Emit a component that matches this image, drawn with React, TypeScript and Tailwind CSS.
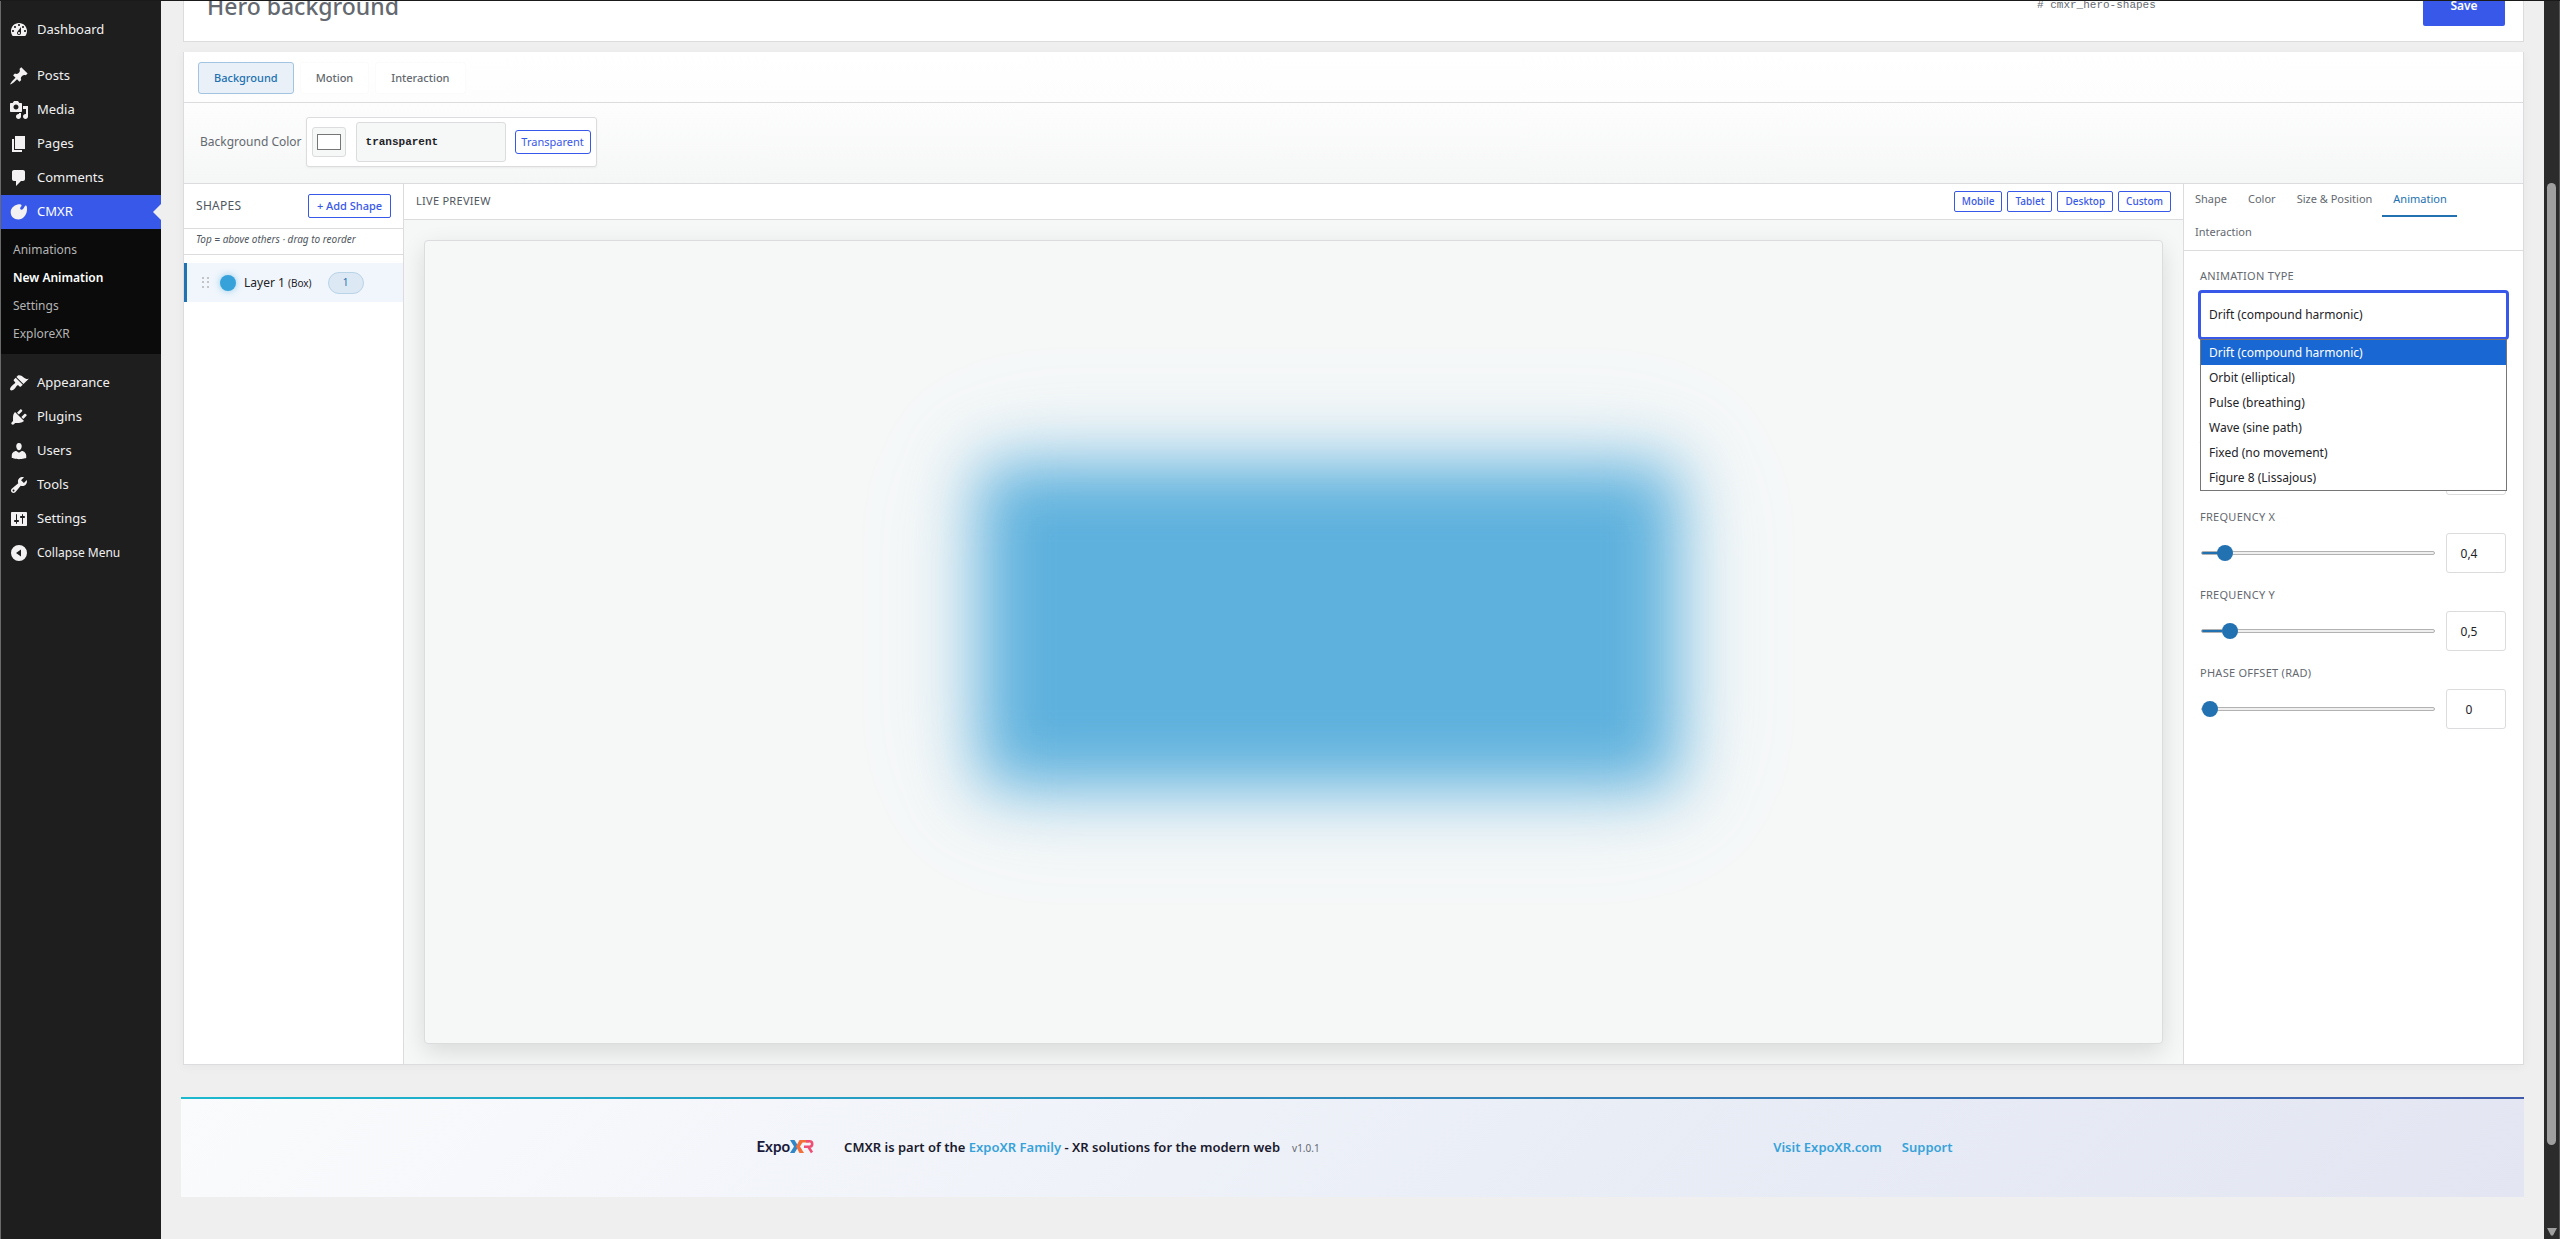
import React, { useState } from 'react';

const ICONS = {
  dashboard:
    'M3.76 16h12.48c1.1-1.37 1.76-3.11 1.76-5 0-4.42-3.58-8-8-8s-8 3.58-8 8c0 1.89.66 3.63 1.76 5zM10 4c.55 0 1 .45 1 1s-.45 1-1 1-1-.45-1-1 .45-1 1-1zM6 6c.55 0 1 .45 1 1s-.45 1-1 1-1-.45-1-1 .45-1 1-1zm8 0c.55 0 1 .45 1 1s-.45 1-1 1-1-.45-1-1 .45-1 1-1zm-5.37 5.55L12 7v6c0 1.1-.9 2-2 2s-2-.9-2-2c0-.57.24-1.08.63-1.45zM4 10c.55 0 1 .45 1 1s-.45 1-1 1-1-.45-1-1 .45-1 1-1zm12 0c.55 0 1 .45 1 1s-.45 1-1 1-1-.45-1-1 .45-1 1-1zm-5 3c0-.55-.45-1-1-1s-1 .45-1 1 .45 1 1 1 1-.45 1-1z',
  post: 'M10.44 3.02l1.82-1.82 6.36 6.35-1.83 1.82c-1.05-.68-2.48-.57-3.41.36l-.75.75c-.92.93-1.04 2.35-.35 3.41l-1.83 1.82-2.41-2.41-2.8 2.79c-.42.42-3.38 2.71-3.8 2.29s1.86-3.39 2.28-3.81l2.79-2.79L4.1 9.36l1.83-1.82c1.05.69 2.48.57 3.4-.36l.75-.75c.93-.92 1.05-2.35.36-3.41z',
  media:
    'M13 11V4c0-.55-.45-1-1-1h-1.67L9 1H5L3.67 3H2c-.55 0-1 .45-1 1v7c0 .55.45 1 1 1h10c.55 0 1-.45 1-1zM7 4.5c1.38 0 2.5 1.12 2.5 2.5S8.38 9.5 7 9.5 4.5 8.38 4.5 7 5.62 4.5 7 4.5zM14 6h5v10.5c0 1.38-1.12 2.5-2.5 2.5S14 17.88 14 16.5s1.12-2.5 2.5-2.5c.17 0 .34.02.5.05V9h-3V6zm-4 8.05V13h2v3.5c0 1.38-1.12 2.5-2.5 2.5S7 17.88 7 16.5 8.12 14 9.5 14c.17 0 .34.02.5.05z',
  page: 'M6 15V2h10v13H6zm-1 1h8v2H3V5h2v11z',
  comments:
    'M5 2h9c1.1 0 2 .9 2 2v7c0 1.1-.9 2-2 2h-2l-5 5v-5H5c-1.1 0-2-.9-2-2V4c0-1.1.9-2 2-2z',
  cmxr: 'M8.6 2.6c1.9-.5 3.6-.2 3.9.6.3.9-.9 1.6-1.3 2.6-.3 1 .3 1.9 1.2 1.9 1.5 0 2.3-1.3 2.9-2.7.5-1.1 1.3-1.8 2-1.3.8.6.9 2.9.6 5-.6 4.6-3.9 8.8-8.5 8.8-4.4 0-7.7-3-7.7-7.2 0-3.7 2.9-6.7 6.9-7.7z',
  appearance:
    'M14.48 11.06L7.41 3.99l1.5-1.5c.5-.56 2.3-.47 3.51.32 1.21.8 1.43 1.28 2.91 2.1 1.18.64 2.45 1.26 4.45.85zm-.71.71L6.7 4.7 4.93 6.47c-.39.39-.39 1.02 0 1.41l1.06 1.06c.39.39.39 1.03 0 1.42-.6.6-1.43 1.11-2.21 1.69-.35.26-.7.53-1.01.84C1.43 14.23.4 16.08 1.4 17.07c.99 1 2.84-.03 4.18-1.36.31-.31.58-.66.85-1.02.57-.78 1.08-1.61 1.69-2.21.39-.39 1.02-.39 1.41 0l1.06 1.06c.39.39 1.02.39 1.41 0z',
  plugins:
    'M13.11 4.36L9.87 7.6 8 5.73l3.24-3.24c.35-.34 1.05-.2 1.56.32.52.51.66 1.21.31 1.55zm-8 1.77l.91-1.12 9.01 9.01-1.19.84c-.71.71-2.63 1.16-3.82 1.16H6.14L4.9 17.26c-.59.59-1.54.59-2.12 0-.59-.58-.59-1.53 0-2.12l1.24-1.24v-3.88c0-1.13.4-3.19 1.09-3.89zm7.26 3.97l3.24-3.24c.34-.35 1.04-.21 1.55.31.52.51.66 1.21.31 1.55l-3.24 3.25z',
  users:
    'M10 9.25c-2.27 0-2.73-3.44-2.73-3.44C7 4.02 7.82 2 9.97 2c2.16 0 2.98 2.02 2.71 3.81 0 0-.41 3.44-2.68 3.44zm0 2.57L12.72 10c2.39 0 4.52 2.33 4.52 4.53v2.49s-3.65 1.13-7.24 1.13c-3.65 0-7.24-1.13-7.24-1.13v-2.49c0-2.25 1.94-4.48 4.47-4.48z',
  tools:
    'M16.68 9.77c-1.34 1.34-3.3 1.67-4.95.99l-5.41 6.52c-.99.99-2.59.99-3.58 0s-.99-2.59 0-3.57l6.52-5.42c-.68-1.65-.35-3.61.99-4.95 1.28-1.28 3.12-1.62 4.72-1.06l-2.89 2.89 2.82 2.82 2.86-2.87c.53 1.58.18 3.39-1.08 4.65zM3.81 16.21c.4.39 1.04.39 1.43 0 .4-.4.4-1.04 0-1.43-.39-.4-1.03-.4-1.43 0-.39.39-.39 1.03 0 1.43z',
  settings:
    'M18 16V4c0-.55-.45-1-1-1H3c-.55 0-1 .45-1 1v12c0 .55.45 1 1 1h14c.55 0 1-.45 1-1zM8 11h1c.55 0 1 .45 1 1s-.45 1-1 1H8v1.5c0 .28-.22.5-.5.5s-.5-.22-.5-.5V13H6c-.55 0-1-.45-1-1s.45-1 1-1h1V5.5c0-.28.22-.5.5-.5s.5.22.5.5V11zm5-2h-1c-.55 0-1-.45-1-1s.45-1 1-1h1V5.5c0-.28.22-.5.5-.5s.5.22.5.5V7h1c.55 0 1 .45 1 1s-.45 1-1 1h-1v5.5c0 .28-.22.5-.5.5s-.5-.22-.5-.5V9z',
  collapse: 'M10 2a8 8 0 1 0 0 16 8 8 0 0 0 0-16zm2 11.5l-5-3.5 5-3.5z',
};

type IconName = keyof typeof ICONS;

function Icon({ name }: { name: IconName }) {
  return (
    <svg viewBox="0 0 20 20" className="h-5 w-5 shrink-0" fill="#f3f1f1" fillRule="evenodd" aria-hidden="true">
      <path d={ICONS[name]} />
    </svg>
  );
}

function MenuItem({ icon, label }: { icon: IconName; label: string }) {
  return (
    <a href="#" className="flex h-[34px] items-center gap-2 pl-2 text-[13px] text-[#f0f0f1]">
      <Icon name={icon} />
      {label}
    </a>
  );
}

const SUBMENU = ['Animations', 'New Animation', 'Settings', 'ExploreXR'];

function Sidebar() {
  return (
    <nav aria-label="Main menu" className="w-[161px] shrink-0 border-l border-[#6a6a6a] bg-[#1e1e1e] pt-3">
      <MenuItem icon="dashboard" label="Dashboard" />
      <div className="mt-3">
        <MenuItem icon="post" label="Posts" />
        <MenuItem icon="media" label="Media" />
        <MenuItem icon="page" label="Pages" />
        <MenuItem icon="comments" label="Comments" />
      </div>
      <a href="#" className="flex h-[34px] items-center gap-2 bg-[#3858e9] pl-2 text-[13px] text-white">
        <Icon name="cmxr" />
        CMXR
        <svg viewBox="0 0 8 16" className="ml-auto h-4 w-2" fill="#efefef" aria-hidden="true">
          <path d="M8 0v16L0 8z" />
        </svg>
      </a>
      <div className="bg-[#0b0b0b] pt-[7px] pb-1.5">
        {SUBMENU.map((item) => (
          <a
            key={item}
            href="#"
            className={
              item === 'New Animation'
                ? 'flex h-7 items-center pl-3 text-xs font-semibold text-white'
                : 'flex h-7 items-center pl-3 text-xs text-[#b4b4b4]'
            }
          >
            {item}
          </a>
        ))}
      </div>
      <div className="mt-3">
        <MenuItem icon="appearance" label="Appearance" />
        <MenuItem icon="plugins" label="Plugins" />
        <MenuItem icon="users" label="Users" />
        <MenuItem icon="tools" label="Tools" />
        <MenuItem icon="settings" label="Settings" />
        <button type="button" className="flex h-[34px] w-full items-center gap-2 pl-2 text-xs text-[#f0f0f1]">
          <Icon name="collapse" />
          Collapse Menu
        </button>
      </div>
    </nav>
  );
}

function TitleBar() {
  return (
    <header className="-mt-8 ml-0.5 flex h-[73px] items-center border border-[#dcdcde] bg-white pr-[18px] pl-[23px]">
      <input
        aria-label="Animation title"
        defaultValue="Hero background"
        className="h-10 min-w-0 flex-1 bg-transparent text-[23px] font-medium text-[#646970] outline-none"
      />
      <code className="w-[386px] font-[Liberation_Mono,monospace] text-[11px] text-[#646970]"># cmxr_hero-shapes</code>
      <button type="button" className="h-10 w-[82px] rounded-[2px] bg-[#3858e9] text-xs font-semibold text-white">
        Save
      </button>
    </header>
  );
}

function SettingsTabs() {
  const base = 'h-8 rounded-[3px] border px-[15px] text-[11px] font-medium';
  return (
    <div className="flex h-[51px] items-end gap-1.5 border-b border-[#dcdcde] bg-[linear-gradient(#ffffff,#fdfdfd)] pb-2 pl-[14px]">
      <button type="button" className={`${base} border-[#a3c4e0] bg-[#e9f0f7] text-[#2271b1]`}>
        Background
      </button>
      <button type="button" className={`${base} border-[#fbfbfb] bg-white text-[#646970]`}>
        Motion
      </button>
      <button type="button" className={`${base} border-[#fbfbfb] bg-white text-[#646970]`}>
        Interaction
      </button>
    </div>
  );
}

function BackgroundRow() {
  return (
    <div className="flex h-[81px] items-center gap-1 border-b border-[#dcdcde] bg-[linear-gradient(#fdfdfd,#f5f7f6)] pb-0.5 pl-4">
      <label htmlFor="bg-color" className="text-xs text-[#646970]">
        Background Color
      </label>
      <div className="flex h-[50px] items-center rounded-[3px] border border-[#dcdcde] bg-white px-[5px] shadow-xs">
        <button
          type="button"
          aria-label="Pick a color"
          className="flex h-[30px] w-[34px] items-center justify-center rounded-[3px] border border-[#dcdcde] bg-[#f6f7f7]"
        >
          <span className="block h-4 w-6 border border-[#767676] bg-white" />
        </button>
        <input
          id="bg-color"
          defaultValue="transparent"
          className="ml-2.5 h-10 w-[150px] rounded-[3px] border border-[#dcdcde] bg-[#f6f7f7] px-[9px] font-[Liberation_Mono,monospace] text-[11px] font-bold text-[#1d2327] outline-none"
        />
        <button
          type="button"
          className="ml-[9px] h-6 w-[76px] rounded-[3px] border border-[#3858e9] bg-white text-[11px] text-[#3858e9]"
        >
          Transparent
        </button>
      </div>
    </div>
  );
}

function ShapesPanel() {
  return (
    <section className="w-[220px] shrink-0 border-r border-[#dcdcde] bg-white">
      <div className="flex h-[45px] items-center justify-between border-b border-[#dcdcde] px-3">
        <h2 className="text-xs tracking-wide text-[#50575e]">SHAPES</h2>
        <button
          type="button"
          className="h-6 w-[83px] rounded-[2px] border border-[#3858e9] bg-white text-[11px] font-medium text-[#3858e9]"
        >
          + Add Shape
        </button>
      </div>
      <p className="h-[26px] border-b border-[#dcdcde] pl-3 text-[10px] leading-[21px] text-[#50575e] italic">
        Top = above others · drag to reorder
      </p>
      <div className="mt-2 flex h-[39px] items-center border-l-3 border-[#2271b1] bg-[#f0f6fc] pl-[15px]">
        <svg viewBox="0 0 7 11" className="h-[11px] w-[7px]" fill="#c3c4c7" aria-hidden="true">
          <path d="M0 0h2v2H0zM5 0h2v2H5zM0 4h2v2H0zM5 4h2v2H5zM0 9h2v2H0zM5 9h2v2H5z" />
        </svg>
        <span className="ml-[11px] h-4 w-4 rounded-full bg-[#37a2d9] shadow-[0_0_6px_#37a2d980]" />
        <span className="ml-2 text-xs text-[#1d2327]">
          Layer 1 <span className="text-[10px]">(Box)</span>
        </span>
        <span className="ml-4 flex h-[22px] w-9 items-center justify-center rounded-full border border-[#b9d3e7] bg-[#dce8f3] text-[10px] text-[#2271b1]">
          1
        </span>
      </div>
    </section>
  );
}

function Preview() {
  return (
    <section className="flex min-w-0 flex-1 flex-col bg-[#f6f7f7]">
      <div className="flex h-9 items-center justify-between border-b border-[#dcdcde] bg-white pr-3 pl-3">
        <h2 className="text-[11px] tracking-wide text-[#50575e]">LIVE PREVIEW</h2>
        <div className="flex gap-[5px]">
          {['Mobile', 'Tablet', 'Desktop', 'Custom'].map((device) => (
            <button
              key={device}
              type="button"
              className="h-[21px] rounded-[2px] border border-[#3858e9] bg-white px-[7px] text-[10px] font-medium text-[#3858e9]"
            >
              {device}
            </button>
          ))}
        </div>
      </div>
      <div className="overflow-hidden p-5">
        <div className="relative h-[804px] overflow-hidden rounded-[4px] border border-[#dcdcde] bg-[#f6f8f8] shadow-[0_8px_24px_rgba(0,0,0,0.12)]">
          <div className="absolute top-[28%] left-[32%] h-[40%] w-[40%] bg-[#5eb1dd] shadow-[0_0_80px_rgba(94,177,221,0.3)] blur-[32px]" />
        </div>
      </div>
    </section>
  );
}

const ANIMATION_TYPES = [
  'Drift (compound harmonic)',
  'Orbit (elliptical)',
  'Pulse (breathing)',
  'Wave (sine path)',
  'Fixed (no movement)',
  'Figure 8 (Lissajous)',
];

function RangeField({ label, value, min, max }: { label: string; value: number; min: number; max: number }) {
  const [current, setCurrent] = useState(value);
  const id = label.toLowerCase().replace(/[^a-z]+/g, '-');
  const filled = ((current - min) / (max - min)) * 100;
  return (
    <div className="h-[78px]">
      <label htmlFor={id} className="block h-6 text-[11px] leading-4 tracking-wide text-[#646970]">
        {label}
      </label>
      <div className="flex h-10 items-center justify-between pr-px pl-px">
        <input
          id={id}
          type="range"
          min={min}
          max={max}
          step={0.05}
          value={current}
          onChange={(e) => setCurrent(Number(e.target.value))}
          style={{
            backgroundImage: `linear-gradient(90deg, #2271b1 ${filled}%, transparent ${filled}%)`,
          }}
          className="h-1 w-[234px] appearance-none rounded-full border border-[#b2b2b2] bg-[#efefef] bg-origin-border [&::-webkit-slider-thumb]:h-4 [&::-webkit-slider-thumb]:w-4 [&::-webkit-slider-thumb]:appearance-none [&::-webkit-slider-thumb]:rounded-full [&::-webkit-slider-thumb]:bg-[#2271b1]"
        />
        <input
          aria-label={`${label} value`}
          value={String(current).replace('.', ',')}
          readOnly
          className="h-10 w-[60px] rounded-[3px] border border-[#dcdcde] bg-white pr-[18px] pl-1 text-center text-xs text-[#1d2327] outline-none"
        />
      </div>
    </div>
  );
}

function Inspector() {
  return (
    <section className="w-[339px] shrink-0 bg-white">
      <div className="flex flex-wrap border-b border-[#dcdcde]">
        {['Shape', 'Color', 'Size & Position', 'Animation', 'Interaction'].map((tab) => (
          <button
            key={tab}
            type="button"
            className={
              tab === 'Animation'
                ? 'h-[33px] border-b-2 border-[#2271b1] pr-2.5 pl-[11px] text-[11px] text-[#2271b1]'
                : 'h-[33px] border-b-2 border-transparent pr-2.5 pl-[11px] text-[11px] text-[#646970]'
            }
          >
            {tab}
          </button>
        ))}
      </div>
      <div className="px-4 pt-[17px]">
        <label htmlFor="animation-type" className="block h-[22px] text-[11px] leading-4 tracking-wide text-[#646970]">
          ANIMATION TYPE
        </label>
        <div className="relative -mx-0.5 mb-[13px]">
          <select
            id="animation-type"
            className="block h-[50px] w-full appearance-none rounded-[4px] border-3 border-[#3858e9] bg-white pl-2 text-xs text-[#1d2327] outline-none"
          >
            {ANIMATION_TYPES.map((type) => (
              <option key={type}>{type}</option>
            ))}
          </select>
          <ul
            role="listbox"
            aria-label="Animation type options"
            className="absolute inset-x-0.5 top-[49px] z-10 border border-[#767676] bg-white"
          >
            {ANIMATION_TYPES.map((type, index) => (
              <li
                key={type}
                role="option"
                aria-selected={index === 0}
                className={
                  index === 0
                    ? 'h-[25px] bg-[#1967d2] pl-2 text-xs leading-[25px] text-white'
                    : 'h-[25px] pl-2 text-xs leading-[25px] text-[#1d2327]'
                }
              >
                {type}
              </li>
            ))}
          </ul>
        </div>
        <RangeField label="AMPLITUDE X" value={20} min={0} max={100} />
        <RangeField label="AMPLITUDE Y" value={20} min={0} max={100} />
        <RangeField label="FREQUENCY X" value={0.4} min={0.05} max={5} />
        <RangeField label="FREQUENCY Y" value={0.5} min={0.05} max={5} />
        <RangeField label="PHASE OFFSET (RAD)" value={0} min={0} max={6.25} />
      </div>
    </section>
  );
}

function Logo() {
  return (
    <span className="mr-[30px] flex items-center pb-1 pl-1 font-[Lato,sans-serif] text-[15px] leading-4 font-bold text-[#1a1a3a]">
      Expo
      <svg viewBox="0 0 24 15" className="h-[15px] w-6" fill="none" role="img" aria-label="XR">
        <path d="M0 1h4.500l4 6.500-4 6.500H0l4-6.500z" fill="#2f86c6" />
        <path d="M14 1H9.500L6 7.500 9.500 14H14l-4-6.500z" fill="#f4703b" />
        <path d="M12 1h7v2.600h-8.500z" fill="#f4703b" />
        <path d="M16 2.300h3.500a2.700 2.700 0 0 1 0 5.400H14M18.500 8l3.500 5.500" stroke="#ef4f74" strokeWidth="2.600" />
      </svg>
    </span>
  );
}

function Footer() {
  return (
    <footer className="mt-8">
      <div className="h-0.5 bg-[linear-gradient(90deg,#1bb9ce,#3f5aab)]" />
      <div className="bg-[linear-gradient(135deg,#fafbfc_0%,#f5f7fb_20%,#e9edf6_60%,#e3e6f2_100%)]">
        <div className="mx-auto flex h-[98px] max-w-[1200px] items-center text-[13px] font-semibold">
          <Logo />
          <p className="text-[#1a1a2e]">
            CMXR is part of the{' '}
            <a href="#" className="text-[#37a2d9]">
              ExpoXR Family
            </a>{' '}
            - XR solutions for the modern web
          </p>
          <span className="ml-3 text-[10px] font-normal text-[#646970]">v1.0.1</span>
          <div className="ml-auto flex gap-5 text-[#37a2d9]">
            <a href="#">Visit ExpoXR.com</a>
            <a href="#">Support</a>
          </div>
        </div>
      </div>
    </footer>
  );
}

function ScrollRail() {
  return (
    <div
      className="flex w-4 shrink-0 flex-col items-center justify-between border-r border-[#555555] bg-[#2b2b2b] pt-[182px] pb-[3px]"
      aria-hidden="true"
    >
      <div className="h-[962px] w-[9px] rounded-full bg-[#9f9f9f]" />
      <svg viewBox="0 0 10 8" className="h-2 w-2.5" fill="#9f9f9f">
        <path d="M0 0h10L6 7.5H4z" />
      </svg>
    </div>
  );
}

export default function App() {
  return (
    <div className="flex min-h-screen border-t border-[#1a1a1a] bg-[#efefef] font-['Noto_Sans','Open_Sans',sans-serif]">
      <Sidebar />
      <main className="min-w-0 flex-1 overflow-hidden px-5">
        <TitleBar />
        <div className="mt-2.5 ml-0.5 border-x border-b border-[#dcdcde] bg-white shadow-[0_2px_10px_rgba(0,0,0,0.04)]">
          <SettingsTabs />
          <BackgroundRow />
          <div className="flex">
            <ShapesPanel />
            <Preview />
            <div className="flex border-l border-[#dcdcde]">
              <Inspector />
            </div>
          </div>
        </div>
        <Footer />
      </main>
      <ScrollRail />
    </div>
  );
}
